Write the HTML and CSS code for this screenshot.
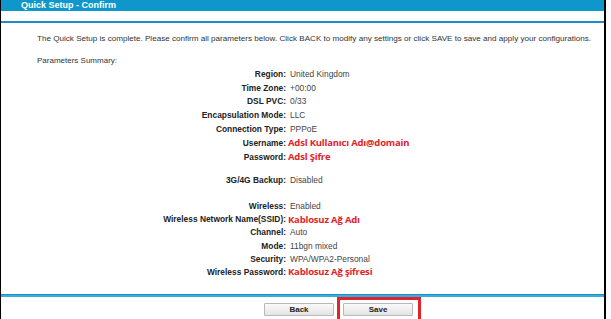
FILE: index.html
```html
<!DOCTYPE html>
<html>
  <head>
    <meta charset="utf-8" />
    <title>Quick Setup - Confirm</title>
    <meta name="viewport" content="width=device-width, initial-scale=1" />
    <link rel="stylesheet" href="styles.css">
  </head>

  <body>
    <div id="frame">
      <div class="title-bar">Quick Setup - Confirm</div>
      <div class="title-rule"></div>

      <div class="content">
        <p class="intro">The Quick Setup is complete. Please confirm all parameters below. Click BACK to modify any settings or click SAVE to save and apply your configurations.</p>
        <p class="summary">Parameters Summary:</p>

        <div class="params">
          <span class="label">Region:</span><span class="value">United Kingdom</span>
          <span class="label">Time Zone:</span><span class="value">+00:00</span>
          <span class="label">DSL PVC:</span><span class="value">0/33</span>
          <span class="label">Encapsulation Mode:</span><span class="value">LLC</span>
          <span class="label">Connection Type:</span><span class="value">PPPoE</span>
          <span class="label">Username:</span><span class="value note">Adsl Kullanıcı Adı@domain</span>
          <span class="label">Password:</span><span class="value note">Adsl Şifre</span>
        </div>

        <div class="params backup">
          <span class="label">3G/4G Backup:</span><span class="value">Disabled</span>
        </div>

        <div class="params wireless">
          <span class="label">Wireless:</span><span class="value">Enabled</span>
          <span class="label">Wireless Network Name(SSID):</span><span class="value note">Kablosuz Ağ Adı</span>
          <span class="label">Channel:</span><span class="value">Auto</span>
          <span class="label">Mode:</span><span class="value">11bgn mixed</span>
          <span class="label">Security:</span><span class="value">WPA/WPA2-Personal</span>
          <span class="label">Wireless Password:</span><span class="value note">Kablosuz Ağ şifresi</span>
        </div>
      </div>

      <div class="bottom-rule"></div>

      <div class="actions">
        <button class="btn" type="button">Back</button>
        <span class="highlight">
          <button class="btn" type="button">Save</button>
        </span>
      </div>
    </div>
  </body>
</html>
```

FILE: styles.css
```css
* {
    box-sizing: border-box;
}

body {
    margin: 0;
    width: 611px;
    height: 319px;
    overflow: hidden;
    background-color: #fff;

    font-family: 'Liberation Sans', Arial, sans-serif;
    font-size: 8px;
    color: #333;
}

#frame {
    width: 606px;
    height: 319px;
    border-left: 1px solid #000;
    border-right: 2px solid #000;
    overflow: hidden;
}

.title-bar {
    height: 11px;
    padding-left: 20px;
    background-color: #0f97cb;

    font-size: 9px;
    font-weight: bold;
    line-height: 11px;
    color: #fff;
}

.title-rule {
    height: 12px;
    background-color: #fbfdfe;
    border-bottom: 2px solid #1a8fc0;
}

.content {
    height: 271px;
    padding: 11px 0 0 36px;
}

.intro {
    margin: 0;
    font-size: 8.1px;
    line-height: 10px;
}

.summary {
    margin: 12px 0 0;
    line-height: 10px;
}

.params {
    display: grid;
    grid-template-columns: 249px auto;
    column-gap: 4px;
    grid-auto-rows: 13.8px;
    align-items: center;
    margin-top: 1px;
}

.backup {
    margin-top: 10px;
}

.wireless {
    margin-top: 12px;
    grid-auto-rows: 13.2px;
}

.label {
    text-align: right;
    font-size: 8.4px;
    font-weight: bold;
    color: #222;
}

.value {
    font-size: 8.4px;
    color: #444;
}

.note {
    margin-left: -2px;
    font-family: 'Open Sans', 'Liberation Sans', sans-serif;
    font-size: 9.5px;
    font-weight: bold;
    letter-spacing: -0.2px;
    color: #e3232a;
}

.bottom-rule {
    height: 3px;
    background-color: #38aee0;
    border-top: 1px solid #1f8ec0;
}

.actions {
    display: flex;
    align-items: flex-start;
    gap: 3px;
    padding-left: 263px;
}

.btn {
    width: 70px;
    height: 13px;
    margin-top: 6px;
    padding: 0;

    background: linear-gradient(#fafafa, #e4e4e4);
    border: 1px solid #b8b8b8;
    border-radius: 1px;

    font-family: 'Liberation Sans', Arial, sans-serif;
    font-size: 8px;
    font-weight: bold;
    color: #222;
}

.highlight {
    display: flex;
    height: 26px;
    padding: 0 5px 0 3px;
    border: 3px solid #e3232a;
}

.highlight .btn {
    margin-top: 3px;
}
```
